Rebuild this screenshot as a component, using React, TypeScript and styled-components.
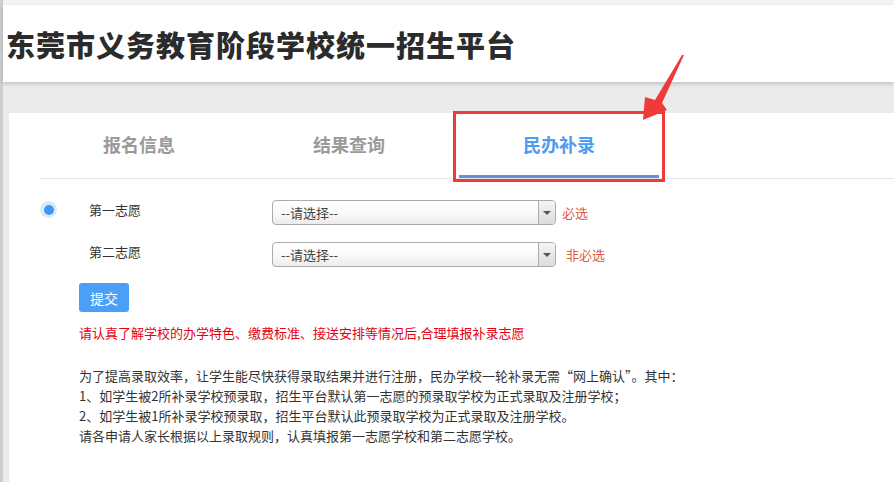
import React from 'react';
import styled, { createGlobalStyle } from 'styled-components';

const GlobalStyle = createGlobalStyle`
  html, body {
    margin: 0;
    padding: 0;
    background: #ebebeb;
    font-family: "Noto Sans CJK SC", "Noto Sans", sans-serif;
    color: #333;
    overflow: hidden;
  }
`;

const Page = styled.div`
  display: flex;
  min-height: 482px;
`;

const LeftStrip = styled.div`
  width: 3px;
  flex-shrink: 0;
  background: #cdcdd2;
`;

const Main = styled.div`
  flex: 1;
  display: flex;
  flex-direction: column;
  background: #ebebeb;
`;

const TopStrip = styled.div`
  height: 5px;
  background: #f3f3f3;
`;

const Header = styled.header`
  height: 77px;
  background: #fff;
  display: flex;
  align-items: center;
  padding-left: 3px;
  box-shadow: 0 2px 4px rgba(0, 0, 0, 0.18);
  position: relative;
  z-index: 1;
`;

const Title = styled.h1`
  margin: 0;
  font-size: 29px;
  font-weight: 900;
  letter-spacing: 1px;
  color: #2b2b2b;
`;

const Card = styled.section`
  margin: 31px 0 0 6px;
  background: #fff;
  flex: 1;
  position: relative;
  z-index: 2;
`;

const TabBar = styled.nav`
  display: flex;
  gap: 10px;
  margin-left: 30px;
  border-bottom: 1px solid #e6e6e6;
`;

const Tab = styled.div<{ $active?: boolean }>`
  width: 200px;
  height: 62px;
  display: flex;
  align-items: center;
  justify-content: center;
  font-size: 18px;
  font-weight: 700;
  color: ${({ $active }) => ($active ? '#4d9cf2' : '#9a9a9a')};
  border-bottom: 3px solid ${({ $active }) => ($active ? '#6690da' : 'transparent')};
  position: relative;
`;

const Highlight = styled.div`
  position: absolute;
  left: -6px;
  top: -2px;
  width: 212px;
  height: 71px;
  box-sizing: border-box;
  border: 3px solid #ee3a3a;
  pointer-events: none;
`;

const Pointer = styled.svg`
  position: absolute;
  left: 181px;
  top: -63px;
  width: 50px;
  height: 75px;
  overflow: visible;
`;

const Form = styled.div`
  padding: 21px 0 0 31px;
  display: flex;
  flex-direction: column;
  gap: 17px;
`;

const Row = styled.div`
  display: flex;
  align-items: center;
  height: 25px;
`;

const RadioSlot = styled.div`
  width: 49px;
  display: flex;
  align-items: center;
  margin-top: -6px;
`;

const Radio = styled.span`
  width: 17px;
  height: 17px;
  border-radius: 50%;
  background: #dce9fb;
  display: flex;
  align-items: center;
  justify-content: center;

  &::after {
    content: '';
    width: 10px;
    height: 10px;
    border-radius: 50%;
    background: #4097f6;
  }
`;

const Label = styled.span`
  width: 183px;
  font-size: 13px;
  margin-top: -6px;
`;

const Select = styled.div`
  width: 284px;
  height: 25px;
  box-sizing: border-box;
  border: 1px solid #aaa;
  border-radius: 4px;
  background: linear-gradient(#fff 0%, #fafafa 50%, #ececec 100%);
  display: flex;
  align-items: center;
  font-size: 13px;
  color: #444;
  overflow: hidden;
`;

const SelectText = styled.span`
  flex: 1;
  padding-left: 8px;
`;

const SelectArrow = styled.span`
  width: 16px;
  height: 100%;
  border-left: 1px solid #aaa;
  background: linear-gradient(#f4f4f4, #dcdcdc);
  display: flex;
  align-items: center;
  justify-content: center;

  &::after {
    content: '';
    border-left: 4px solid transparent;
    border-right: 4px solid transparent;
    border-top: 4px solid #555;
  }
`;

const Note = styled.span<{ $gap: number }>`
  margin-left: ${({ $gap }) => $gap}px;
  font-size: 13px;
  color: #e05a4a;
`;

const Submit = styled.button`
  width: 50px;
  height: 29px;
  margin: 16px 0 0 70px;
  padding: 0;
  border: none;
  border-radius: 3px;
  background: #4c9ff6;
  color: #fff;
  font-family: inherit;
  font-size: 14px;
`;

const Warning = styled.p`
  margin: 12px 0 0 70px;
  font-size: 13px;
  line-height: 18px;
  color: #e60012;
`;

const Rules = styled.div`
  margin: 24px 0 0 70px;
  font-size: 13px;
  line-height: 20px;
  color: #333;
`;

const App: React.FC = () => {
  return (
    <>
      <GlobalStyle />
      <Page>
        <LeftStrip />
        <Main>
          <TopStrip />
          <Header>
            <Title>东莞市义务教育阶段学校统一招生平台</Title>
          </Header>
          <Card>
            <TabBar>
              <Tab>报名信息</Tab>
              <Tab>结果查询</Tab>
              <Tab $active>
                民办补录
                <Highlight />
                <Pointer viewBox="0 0 50 75">
                  <polygon points="44,5 22,53 27,60 3,70 5,47 15,50 42,5" fill="#f03a3a" />
                </Pointer>
              </Tab>
            </TabBar>
            <Form>
              <Row>
                <RadioSlot>
                  <Radio />
                </RadioSlot>
                <Label>第一志愿</Label>
                <Select>
                  <SelectText>--请选择--</SelectText>
                  <SelectArrow />
                </Select>
                <Note $gap={6}>必选</Note>
              </Row>
              <Row>
                <RadioSlot />
                <Label>第二志愿</Label>
                <Select>
                  <SelectText>--请选择--</SelectText>
                  <SelectArrow />
                </Select>
                <Note $gap={10}>非必选</Note>
              </Row>
            </Form>
            <Submit>提交</Submit>
            <Warning>请认真了解学校的办学特色、缴费标准、接送安排等情况后,合理填报补录志愿</Warning>
            <Rules>
              为了提高录取效率，让学生能尽快获得录取结果并进行注册，民办学校一轮补录无需“网上确认”。其中：
              <br />
              1、如学生被2所补录学校预录取，招生平台默认第一志愿的预录取学校为正式录取及注册学校；
              <br />
              2、如学生被1所补录学校预录取，招生平台默认此预录取学校为正式录取及注册学校。
              <br />
              请各申请人家长根据以上录取规则，认真填报第一志愿学校和第二志愿学校。
            </Rules>
          </Card>
        </Main>
      </Page>
    </>
  );
};

export default App;
